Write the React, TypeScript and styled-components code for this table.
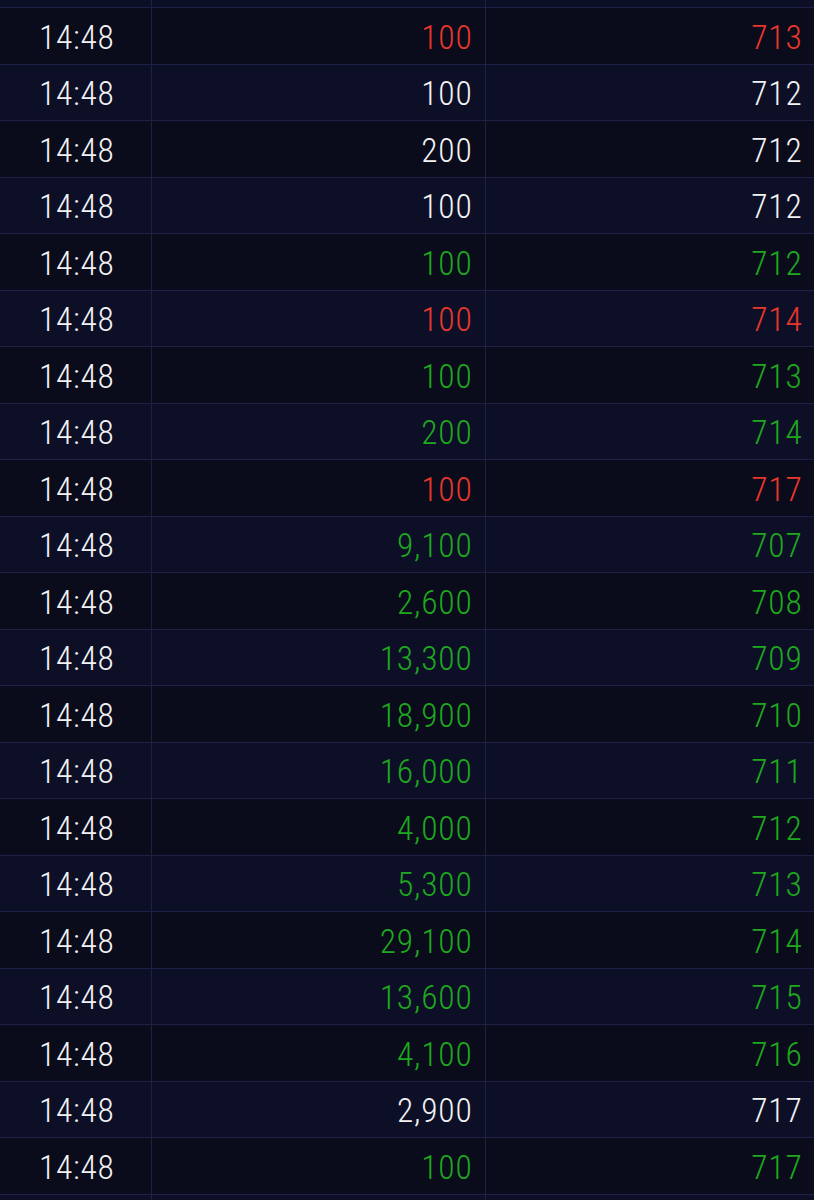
import React from 'react';
import styled, {createGlobalStyle} from 'styled-components';

type Tone = 'up' | 'down' | 'flat';

interface Tick {
  time: string;
  volume: string;
  price: string;
  tone: Tone;
}

const ticks: Tick[] = [
  {time: '14:48', volume: '100', price: '713', tone: 'down'},
  {time: '14:48', volume: '100', price: '712', tone: 'flat'},
  {time: '14:48', volume: '200', price: '712', tone: 'flat'},
  {time: '14:48', volume: '100', price: '712', tone: 'flat'},
  {time: '14:48', volume: '100', price: '712', tone: 'up'},
  {time: '14:48', volume: '100', price: '714', tone: 'down'},
  {time: '14:48', volume: '100', price: '713', tone: 'up'},
  {time: '14:48', volume: '200', price: '714', tone: 'up'},
  {time: '14:48', volume: '100', price: '717', tone: 'down'},
  {time: '14:48', volume: '9,100', price: '707', tone: 'up'},
  {time: '14:48', volume: '2,600', price: '708', tone: 'up'},
  {time: '14:48', volume: '13,300', price: '709', tone: 'up'},
  {time: '14:48', volume: '18,900', price: '710', tone: 'up'},
  {time: '14:48', volume: '16,000', price: '711', tone: 'up'},
  {time: '14:48', volume: '4,000', price: '712', tone: 'up'},
  {time: '14:48', volume: '5,300', price: '713', tone: 'up'},
  {time: '14:48', volume: '29,100', price: '714', tone: 'up'},
  {time: '14:48', volume: '13,600', price: '715', tone: 'up'},
  {time: '14:48', volume: '4,100', price: '716', tone: 'up'},
  {time: '14:48', volume: '2,900', price: '717', tone: 'flat'},
  {time: '14:48', volume: '100', price: '717', tone: 'up'},
];

const toneColors: Record<Tone, string> = {
  up: '#1ea81e',
  down: '#e8382c',
  flat: '#f2f2f4',
};

const App = () => {
  return (
    <>
      <GlobalStyle/>
      <Board>
        <Row $odd={true} $cut>
          <TimeCell/>
          <ValueCell/>
          <ValueCell $last/>
        </Row>
        {ticks.map((tick, i) => (
          <Row key={i} $odd={i % 2 === 1}>
            <TimeCell>{tick.time}</TimeCell>
            <ValueCell $color={toneColors[tick.tone]}>{tick.volume}</ValueCell>
            <ValueCell $color={toneColors[tick.tone]} $last>{tick.price}</ValueCell>
          </Row>
        ))}
        <Row $odd={true}>
          <TimeCell/>
          <ValueCell/>
          <ValueCell $last/>
        </Row>
      </Board>
    </>
  );
};

const GlobalStyle = createGlobalStyle`
  html, body {
    margin: 0;
    background: #0a0b1b;
  }
  body {
    overflow: hidden;
    font-family: Roboto, "Noto Sans", sans-serif;
  }
`;

const Board = styled.div`
  width: 814px;
  height: 1200px;
  overflow: hidden;
  display: flex;
  flex-direction: column;
`;

const Row = styled.div<{ $odd: boolean; $cut?: boolean }>`
  box-sizing: border-box;
  flex: 0 0 ${p => (p.$cut ? '8px' : '56.5px')};
  display: grid;
  grid-template-columns: 152px 334px 1fr;
  background: ${p => (p.$odd ? '#0d0f27' : '#0a0b1b')};
  border-bottom: 1px solid #1e2145;
`;

const TimeCell = styled.div`
  box-sizing: border-box;
  display: flex;
  align-items: center;
  padding: 3px 0 0 39px;
  border-right: 1px solid #1e2145;
  color: #f2f2f4;
  font-size: 33.5px;
  font-weight: 300;
  font-stretch: condensed;
  letter-spacing: 0.7px;
`;

const ValueCell = styled.div<{ $color?: string; $last?: boolean }>`
  box-sizing: border-box;
  display: flex;
  align-items: center;
  justify-content: flex-end;
  padding: 3px ${p => (p.$last ? '11.5px' : '12.5px')} 0 0;
  border-right: ${p => (p.$last ? 'none' : '1px solid #1e2145')};
  color: ${p => p.$color || '#f2f2f4'};
  font-size: 33.5px;
  font-weight: 300;
  font-stretch: condensed;
  letter-spacing: 0.8px;
`;

export default App;
